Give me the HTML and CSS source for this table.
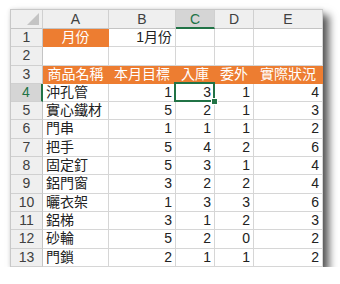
FILE: index.html
```html
<!DOCTYPE html>
<html>
<head>
<meta charset="utf-8">
<link rel="stylesheet" href="styles.css">
</head>
<body>
<div class="sheet">
  <div class="hd corner"><span class="tri"></span></div>
  <div class="hd">A</div><div class="hd">B</div><div class="hd sel-col">C</div><div class="hd">D</div><div class="hd">E</div>

  <div class="rh">1</div><div class="c or ctr">月份</div><div class="c num">1月份</div><div class="c"></div><div class="c"></div><div class="c"></div>
  <div class="rh">2</div><div class="c"></div><div class="c"></div><div class="c"></div><div class="c"></div><div class="c"></div>
  <div class="rh">3</div><div class="c or ctr">商品名稱</div><div class="c or ctr">本月目標</div><div class="c or ctr">入庫</div><div class="c or ctr">委外</div><div class="c or ctr">實際狀況</div>

  <div class="rh sel-row">4</div><div class="c txt">沖孔管</div><div class="c num">1</div><div class="c num active">3</div><div class="c num">1</div><div class="c num">4</div>
  <div class="rh">5</div><div class="c txt">實心鐵材</div><div class="c num">5</div><div class="c num">2</div><div class="c num">1</div><div class="c num">3</div>
  <div class="rh">6</div><div class="c txt">門串</div><div class="c num">1</div><div class="c num">1</div><div class="c num">1</div><div class="c num">2</div>
  <div class="rh">7</div><div class="c txt">把手</div><div class="c num">5</div><div class="c num">4</div><div class="c num">2</div><div class="c num">6</div>
  <div class="rh">8</div><div class="c txt">固定釘</div><div class="c num">5</div><div class="c num">3</div><div class="c num">1</div><div class="c num">4</div>
  <div class="rh">9</div><div class="c txt">鋁門窗</div><div class="c num">3</div><div class="c num">2</div><div class="c num">2</div><div class="c num">4</div>
  <div class="rh">10</div><div class="c txt">曬衣架</div><div class="c num">1</div><div class="c num">3</div><div class="c num">3</div><div class="c num">6</div>
  <div class="rh">11</div><div class="c txt">鋁梯</div><div class="c num">3</div><div class="c num">1</div><div class="c num">2</div><div class="c num">3</div>
  <div class="rh">12</div><div class="c txt">砂輪</div><div class="c num">5</div><div class="c num">2</div><div class="c num">0</div><div class="c num">2</div>
  <div class="rh">13</div><div class="c txt">門鎖</div><div class="c num">2</div><div class="c num">1</div><div class="c num">1</div><div class="c num">2</div>
</div>
</body>
</html>
```
FILE: styles.css
```css
html, body {
  margin: 0;
  padding: 0;
  background: #ffffff;
}
body {
  padding: 9px 0 0 10px;
  font-family: "Liberation Sans", "Noto Sans CJK TC", sans-serif;
  font-size: 14px;
  color: #222;
}
.sheet {
  display: grid;
  grid-template-columns: 32px 66px 67px 39px 39px 69px;
  grid-template-rows: 19px repeat(13, 18.3px);
  width: 312px;
  background: #fff;
  border-top: 1px solid #c8c8c8;
  border-left: 1px solid #c8c8c8;
  box-shadow: 6px 6px 8px rgba(0, 0, 0, 0.65), 0 0 4px rgba(0, 0, 0, 0.12);
  box-sizing: content-box;
}
.sheet > div {
  box-sizing: border-box;
  border-right: 1px solid #d6d6d6;
  border-bottom: 1px solid #d6d6d6;
  line-height: 17px;
  white-space: nowrap;
  overflow: visible;
}
.hd {
  background: #efefef;
  color: #404040;
  text-align: center;
  font-size: 14px;
  border-right-color: #d0d0d0 !important;
  border-bottom-color: #c4c4c4 !important;
  line-height: 18px !important;
}
.corner {
  position: relative;
}
.tri {
  position: absolute;
  right: 3px;
  bottom: 3px;
  width: 0;
  height: 0;
  border-left: 12px solid transparent;
  border-bottom: 12px solid #c4c4c4;
}
.sel-col {
  background: #d5d5d5;
  color: #217346;
  border-bottom: 2px solid #217346 !important;
}
.rh {
  background: #efefef;
  color: #404040;
  text-align: center;
  border-right-color: #c4c4c4 !important;
  border-bottom-color: #d0d0d0 !important;
}
.sel-row {
  background: #d5d5d5;
  color: #217346;
  border-right: 2px solid #217346 !important;
}
.c {
  padding: 0 3px;
}
.txt {
  text-align: left;
}
.num {
  text-align: right;
}
.ctr {
  text-align: center;
}
.or {
  background: #ed7d31;
  color: #ffffff;
  border-right-color: #ed7d31 !important;
  border-bottom-color: #ed7d31 !important;
}
.active {
  position: relative;
}
.active::after {
  content: "";
  position: absolute;
  left: -2px;
  top: -2px;
  right: -1px;
  bottom: -1px;
  border: 2px solid #217346;
  pointer-events: none;
}
.active::before {
  content: "";
  position: absolute;
  right: -4px;
  bottom: -4px;
  width: 5px;
  height: 5px;
  background: #217346;
  border: 1px solid #fff;
  z-index: 2;
}
```
